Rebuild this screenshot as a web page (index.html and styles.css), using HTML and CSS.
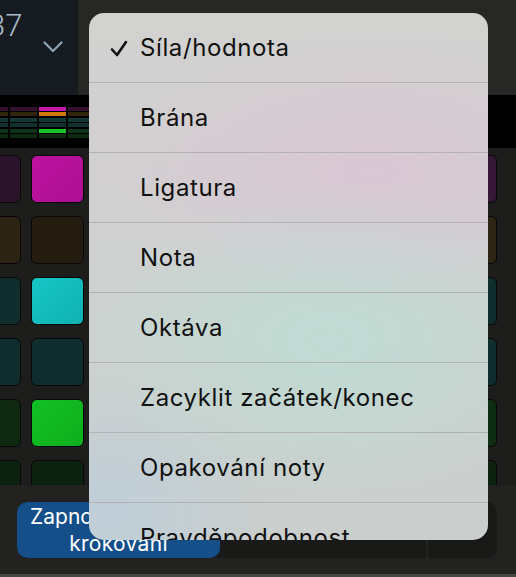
FILE: index.html
```html
<!DOCTYPE html>
<html lang="cs">
<head>
<meta charset="utf-8">
<title>Step Sequencer</title>
<link rel="stylesheet" href="styles.css">
</head>
<body>
<div class="app">
  <header class="topbar">
    <div class="tempo">
      <span class="tempo-value">37</span>
      <svg class="chevron" width="20" height="12" viewBox="0 0 20 12"><polyline points="1.5,1.5 10,10 18.5,1.5" fill="none" stroke="#8ea5b6" stroke-width="2.2" stroke-linecap="round" stroke-linejoin="round"/></svg>
    </div>
    <div class="toolbar"></div>
  </header>

  <div class="overview">
    <div class="ov-row mag"><span></span><span></span><span class="on"></span><span></span></div>
    <div class="ov-row org"><span></span><span></span><span class="on"></span><span></span></div>
    <div class="ov-row teal"><span></span><span></span><span></span><span></span></div>
    <div class="ov-row teal2"><span></span><span></span><span></span><span></span></div>
    <div class="ov-row grn"><span></span><span></span><span class="on"></span><span></span></div>
    <div class="ov-row grn2"><span></span><span></span><span></span><span></span></div>
  </div>

  <div class="grid">
    <div class="row mag"><div class="cell"></div><div class="cell on"></div><div class="cell end"></div></div>
    <div class="row org"><div class="cell"></div><div class="cell dim"></div><div class="cell end"></div></div>
    <div class="row teal"><div class="cell"></div><div class="cell on"></div><div class="cell end"></div></div>
    <div class="row teal2"><div class="cell"></div><div class="cell"></div><div class="cell end"></div></div>
    <div class="row grn"><div class="cell"></div><div class="cell on"></div><div class="cell end"></div></div>
    <div class="row grn2"><div class="cell"></div><div class="cell"></div><div class="cell end"></div></div>
  </div>

  <footer class="footer">
    <div class="segmented">
      <div class="seg active"><span class="line1">Zapnout zadávání</span><br>krokování</div>
      <div class="seg mid"></div>
      <div class="seg last"></div>
    </div>
  </footer>

  <div class="menu">
    <div class="item checked">
      <svg class="check" width="18" height="17" viewBox="0 0 18 17"><polyline points="2,9.5 7,15 16,2" fill="none" stroke="#111" stroke-width="2.6" stroke-linecap="round" stroke-linejoin="round"/></svg>
      <span>Síla/hodnota</span>
    </div>
    <div class="item"><span>Brána</span></div>
    <div class="item"><span>Ligatura</span></div>
    <div class="item"><span>Nota</span></div>
    <div class="item"><span>Oktáva</span></div>
    <div class="item"><span>Zacyklit začátek/konec</span></div>
    <div class="item"><span>Opakování noty</span></div>
    <div class="item"><span>Pravděpodobnost</span></div>
  </div>
</div>
</body>
</html>
```

FILE: styles.css
```css
* { box-sizing: border-box; }
html, body { margin: 0; padding: 0; }
body {
  width: 516px;
  height: 577px;
  overflow: hidden;
  background: #1d1d1c;
  font-family: Inter, "Liberation Sans", Arial, sans-serif;
}
.app {
  position: relative;
  width: 516px;
  height: 577px;
  display: flex;
  flex-direction: column;
  overflow: hidden;
}

/* top bar */
.topbar {
  height: 95px;
  display: flex;
  flex-shrink: 0;
}
.tempo {
  width: 78px;
  background: #151b20;
  display: flex;
  align-items: flex-start;
  overflow: hidden;
}
.tempo-value {
  margin-left: -12px;
  margin-top: 10px;
  font-family: Roboto, "Liberation Sans", sans-serif;
  font-weight: 300;
  font-size: 31px;
  line-height: 31px;
  color: #a8bbc9;
}
.chevron {
  margin-left: 21px;
  margin-top: 41px;
  flex-shrink: 0;
}
.toolbar {
  flex: 1;
  background: #272725;
}

/* overview */
.overview {
  height: 53px;
  flex-shrink: 0;
  background: #000;
  padding-top: 12px;
  display: flex;
  flex-direction: column;
  gap: 1.4px;
}
.ov-row {
  height: 4px;
  display: flex;
  gap: 1.7px;
  margin-left: -19px;
}
.ov-row span {
  width: 27.3px;
  height: 4px;
  flex-shrink: 0;
}
.ov-row.mag span { background: #33122e; }
.ov-row.mag span.on { background: #c418ad; }
.ov-row.org span { background: #30240f; }
.ov-row.org span.on { background: #d07a0c; }
.ov-row.teal span { background: #143836; }
.ov-row.teal2 span { background: #123230; }
.ov-row.grn span { background: #10331a; }
.ov-row.grn span.on { background: #18c527; }
.ov-row.grn2 span { background: #0e2a12; }

/* grid */
.grid {
  flex: 1;
  background: #1d1d1c;
  padding-top: 7px;
  display: flex;
  flex-direction: column;
  gap: 13px;
  overflow: hidden;
}
.row {
  display: flex;
  gap: 10px;
  margin-left: -32px;
  padding-right: 19px;
  flex-shrink: 0;
}
.cell {
  width: 53px;
  height: 48px;
  border: 1.5px solid #070707;
  border-radius: 6px;
  flex-shrink: 0;
}
.cell.end { margin-left: auto; }
.row.mag .cell { background: #2b1429; }
.row.mag .cell.end { background: #361737; }
.row.mag .cell.on { background: linear-gradient(135deg, #bd12a0, #ad0f93); }
.row.org .cell { background: #2d2313; }
.row.org .cell.dim { background: #231c0f; }
.row.org .cell.end { background: #2f2514; }
.row.teal .cell { background: #0f2e2e; }
.row.teal .cell.on { background: linear-gradient(135deg, #17c6c6, #0fb2b0); }
.row.teal2 .cell { background: #0f2d2f; }
.row.grn .cell { background: #0f2910; }
.row.grn .cell.on { background: linear-gradient(135deg, #12bf25, #0eaf1c); }
.row.grn .cell.end { background: #0e2d12; }
.row.grn2 .cell { background: #0c220f; }

/* footer */
.footer {
  height: 92px;
  flex-shrink: 0;
  background: #222220;
  padding: 17px 19px 0 17px;
  border-bottom: 3px solid #464644;
}
.segmented {
  height: 56px;
  display: flex;
  background: #191918;
  border-radius: 10px;
  overflow: hidden;
}
.seg.active {
  width: 203px;
  flex-shrink: 0;
  background: #154f89;
  border-radius: 10px;
  color: #fff;
  font-size: 21px;
  line-height: 27px;
  text-align: center;
  white-space: nowrap;
  padding-top: 1px;
  letter-spacing: 0.3px;
  overflow: hidden;
}
.seg.active .line1 { letter-spacing: 0; }
.seg.mid {
  width: 208px;
  border-right: 2px solid #232322;
}
.seg.last { flex: 1; }

/* popover menu */
.menu {
  position: absolute;
  left: 89px;
  top: 13px;
  width: 399px;
  height: 527px;
  border-radius: 15px;
  overflow: hidden;
  background:
    radial-gradient(ellipse 230px 160px at 240px 330px, rgba(190, 220, 212, 0.9), rgba(190, 220, 212, 0) 100%),
    radial-gradient(ellipse 260px 140px at 280px 160px, rgba(218, 198, 212, 0.9), rgba(218, 198, 212, 0) 100%),
    radial-gradient(ellipse 160px 140px at 20px 500px, rgba(190, 206, 218, 0.9), rgba(190, 206, 218, 0) 100%),
    linear-gradient(180deg, #d2d2d0 0%, #d2cfd1 30%, #ccd3d0 60%, #cacecc 100%);
}
.item {
  height: 70px;
  border-top: 1px solid #b2b3b2;
  display: flex;
  align-items: center;
  padding-left: 51px;
  position: relative;
  font-size: 24px;
  color: #111;
  letter-spacing: 0.6px;
}
.item:first-child {
  height: 69px;
  border-top: none;
}
.check {
  position: absolute;
  left: 21px;
  top: 27px;
}
```
